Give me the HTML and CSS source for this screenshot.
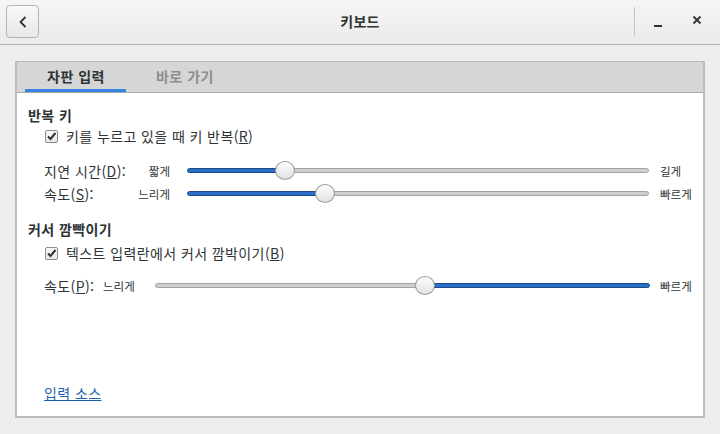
FILE: index.html
```html
<!DOCTYPE html>
<html lang="ko">
<head>
<meta charset="utf-8">
<link rel="stylesheet" href="styles.css">
</head>
<body>
<header class="titlebar">
  <div class="left">
    <button class="back-btn" aria-label="뒤로">
      <svg width="12" height="12" viewBox="0 0 12 12"><path d="M8.5 1 L3.5 6 L8.5 11" fill="none" stroke="#2e3436" stroke-width="1.8"/></svg>
    </button>
  </div>
  <div class="title">키보드</div>
  <div class="right">
    <span class="vsep"></span>
    <span class="wbtn min"><svg width="10" height="10" viewBox="0 0 10 10"><rect x="1" y="7" width="8" height="2" fill="#2e3436"/></svg></span>
    <span class="wbtn close"><svg width="10" height="10" viewBox="0 0 10 10"><path d="M1.5 1.5 L8.5 8.5 M8.5 1.5 L1.5 8.5" stroke="#2e3436" stroke-width="1.8"/></svg></span>
  </div>
</header>
<main class="main">
  <div class="notebook">
    <div class="tabs">
      <div class="tab active">자판 입력</div>
      <div class="tab">바로 가기</div>
    </div>
    <div class="page">
      <div class="heading">반복 키</div>
      <label class="check-row c1"><span class="cb"><svg width="11" height="11" viewBox="0 0 11 11"><path d="M2 5.5 L4.5 8 L9.5 2" fill="none" stroke="#2e3436" stroke-width="2"/></svg></span>키를 누르고 있을 때 키 반복(<u>R</u>)</label>
      <div class="slider-row s1 first">
        <span class="lbl">지연 시간(<u>D</u>):</span>
        <span class="minl">짧게</span>
        <div class="track"><div class="fill" style="width:21.2%"></div><div class="rest"></div><span class="thumb" style="left:21.2%"></span></div>
        <span class="maxl">길게</span>
      </div>
      <div class="slider-row s1">
        <span class="lbl">속도(<u>S</u>):</span>
        <span class="minl">느리게</span>
        <div class="track"><div class="fill" style="width:29.9%"></div><div class="rest"></div><span class="thumb" style="left:29.9%"></span></div>
        <span class="maxl">빠르게</span>
      </div>
      <div class="heading h2">커서 깜빡이기</div>
      <label class="check-row c2"><span class="cb"><svg width="11" height="11" viewBox="0 0 11 11"><path d="M2 5.5 L4.5 8 L9.5 2" fill="none" stroke="#2e3436" stroke-width="2"/></svg></span>텍스트 입력란에서 커서 깜박이기(<u>B</u>)</label>
      <div class="slider-row s2">
        <span class="lbl">속도(<u>P</u>):</span>
        <span class="minl">느리게</span>
        <div class="track inv"><div class="rest" style="width:54.6%"></div><div class="fill"></div><span class="thumb" style="left:54.6%"></span></div>
        <span class="maxl">빠르게</span>
      </div>
      <div class="spacer"></div>
      <a class="link" href="#">입력 소스</a>
    </div>
  </div>
</main>
</body>
</html>
```
FILE: styles.css
```css
* { box-sizing: border-box; }
html, body { margin: 0; padding: 0; }
body {
  width: 720px;
  height: 434px;
  background: #ededed;
  font-family: "Noto Sans CJK KR", "Noto Sans", sans-serif;
  color: #2e3436;
  font-size: 14px;
  overflow: hidden;
  display: flex;
  flex-direction: column;
}
.titlebar {
  height: 45px;
  flex: none;
  background: linear-gradient(#f5f5f5, #ebebeb);
  border-bottom: 1px solid #b6b6b6;
  display: flex;
  align-items: center;
  position: relative;
}
.left { padding-left: 6px; display: flex; align-items: center; }
.back-btn {
  width: 33px;
  height: 33px;
  border: 1px solid #b4b4b4;
  border-radius: 4px;
  background: linear-gradient(#f8f8f8, #e8e8e8);
  display: flex;
  align-items: center;
  justify-content: center;
  padding: 0;
  margin-top: -1px;
}
.title {
  position: absolute;
  left: 0; right: 0; top: 0;
  height: 44px;
  line-height: 42px;
  text-align: center;
  font-weight: bold;
  font-size: 14px;
  letter-spacing: 0.3px;
  pointer-events: none;
}
.right {
  margin-left: auto;
  display: flex;
  align-items: center;
  height: 100%;
}
.vsep {
  width: 1px;
  height: 29px;
  background: #c4c4c4;
  margin-right: 18px;
  margin-top: -2px;
}
.wbtn { width: 10px; height: 10px; display: flex; }
.wbtn.min { margin-right: 29px; margin-top: 2px; }
.wbtn.close { margin-right: 18px; margin-top: -4px; }
.main {
  flex: 1;
  padding: 16px 15px 16px 15px;
  display: flex;
}
.notebook {
  flex: 1;
  display: flex;
  flex-direction: column;
  border: 1px solid #b6b6b6;
  border-left: 2px solid #bcbcbc;
  border-right: 2px solid #bcbcbc;
  border-bottom: 2px solid #bcbcbc;
  background: #fff;
}
.tabs {
  height: 31px;
  flex: none;
  background: #d6d6d6;
  border-bottom: 1px solid #a8a8a8;
  display: flex;
  padding-left: 8px;
}
.tab {
  height: 30px;
  line-height: 28px;
  font-weight: bold;
  font-size: 14px;
  letter-spacing: 0.5px;
  color: #8e8e8e;
  padding: 0 21px 0 22px;
  border-bottom: 3px solid transparent;
}
.tab.active {
  color: #2e3436;
  border-bottom-color: #3584e4;
}
.tab + .tab { margin-left: 8px; }
.page {
  flex: 1;
  display: flex;
  flex-direction: column;
  padding: 11px 0 12px 11px;
  letter-spacing: 0.4px;
}
.heading {
  font-weight: bold;
  font-size: 14px;
  height: 22px;
  line-height: 22px;
}
.heading.h2 { margin-top: 13px; }
.check-row {
  display: flex;
  align-items: center;
  height: 22px;
  padding-left: 17px;
}
.check-row.c1 { margin-top: -1px; }
.check-row.c2 { margin-top: 2px; }
.cb {
  width: 13px;
  height: 13px;
  border: 1px solid #8c8c8c;
  border-radius: 2px;
  background: linear-gradient(#fafafa, #e6e6e6);
  display: flex;
  align-items: center;
  justify-content: center;
  margin-right: 8px;
}
.slider-row {
  display: flex;
  align-items: center;
  height: 23px;
  padding-left: 16px;
  padding-right: 10px;
}
.slider-row.first { margin-top: 12px; }
.s2 { margin-top: 10px; }
.lbl { flex: none; }
.minl, .maxl { font-size: 11.5px; flex: none; letter-spacing: 0; }
.s1 .lbl { width: 92px; }
.s1 .minl { width: 34px; text-align: right; margin-right: 17px; }
.s2 .lbl { width: 59px; }
.s2 .minl { width: 32px; margin-right: 20px; }
.maxl { margin-left: 11px; width: 33px; }
.s2 .maxl { margin-left: 10px; }
.track {
  flex: 1;
  height: 5px;
  display: flex;
  position: relative;
}
.fill {
  height: 5px;
  background: #2a6fc9;
  border: 1px solid #1c4a85;
  border-radius: 3px;
}
.rest {
  height: 5px;
  flex: 1;
  background: #cfcfcf;
  border: 1px solid #a3a3a3;
  border-radius: 3px;
}
.track.inv .rest { flex: none; }
.track.inv .fill { flex: 1; }
.thumb {
  position: absolute;
  top: 50%;
  width: 20px;
  height: 19px;
  margin-left: -10px;
  margin-top: -9.5px;
  border-radius: 50%;
  border: 1px solid #9a9a9a;
  background: linear-gradient(#fdfdfd, #e2e2e2);
}
.spacer { flex: 1; }
.link {
  color: #1b5faf;
  text-decoration: underline;
  margin-left: 16px;
  height: 22px;
  line-height: 22px;
}
```
